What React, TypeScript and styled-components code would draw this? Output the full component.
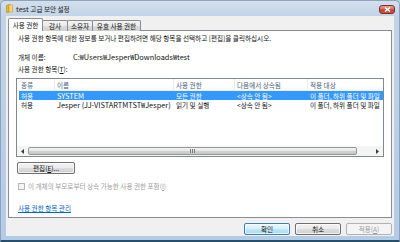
import React from 'react';
import styled, { createGlobalStyle, css } from 'styled-components';

const FONT = `"Noto Sans CJK KR", "Noto Sans", sans-serif`;

const Global = createGlobalStyle`
  html, body { margin: 0; padding: 0; width: 400px; height: 242px; overflow: hidden; background: #b9cde3; }
  * { box-sizing: border-box; }
`;

const Window = styled.div`
  width: 400px;
  height: 242px;
  display: flex;
  flex-direction: column;
  font-family: ${FONT};
  font-size: 6.6px;
  line-height: 8px;
  color: #111;
  background: linear-gradient(180deg, #d3dfec 0px, #c1d3e7 16px, #b4cbe5 100%);
  border: 1px solid #8ea3bb;
  border-bottom: 2px solid #26506c;
  border-radius: 5px 5px 0 0;
`;

const TitleBar = styled.div`
  height: 15px;
  display: flex;
  align-items: center;
  padding: 0 4px 0 5px;
  gap: 3px;
`;

const TitleText = styled.span`
  flex: 1;
  color: #1a1a1a;
`;

const Latin = styled.span`
  font-size: 7.4px;
  line-height: 8px;
`;

const CloseButton = styled.div`
  width: 16px;
  height: 9px;
  margin-top: 2px;
  border-radius: 3px;
  border: 1px solid #7b3128;
  background: linear-gradient(180deg, #e6a596 0%, #d66a5a 45%, #c0402f 55%, #c9584a 100%);
  display: flex;
  align-items: center;
  justify-content: center;
`;

const Client = styled.div`
  flex: 1;
  margin: 0 5px 4px 5px;
  background: #f0f0f0;
  display: flex;
  flex-direction: column;
  padding: 0 2px;
`;

const TabStrip = styled.div`
  height: 15px;
  display: flex;
  align-items: flex-end;
  margin-bottom: -1px;
  position: relative;
  z-index: 1;
`;

const Tab = styled.div<{ $active?: boolean; $w: number }>`
  width: ${p => p.$w}px;
  border: 1px solid #898c95;
  border-bottom: none;
  border-radius: 2px 2px 0 0;
  text-align: center;
  white-space: nowrap;
  & + & { margin-left: -1px; }
  ${p => p.$active
    ? css`
        height: 13px;
        background: #fff;
        padding-top: 2px;
        position: relative;
        z-index: 2;
      `
    : css`
        height: 11px;
        background: linear-gradient(180deg, #f3f3f3 0%, #ebebeb 50%, #dddddd 51%, #cfcfcf 100%);
        padding-top: 1px;
      `}
`;

const Panel = styled.div`
  height: 188px;
  background: #fff;
  border: 1px solid #898c95;
  padding: 0 7px 0 8px;
  display: flex;
  flex-direction: column;
`;

const Line = styled.div<{ $mt: number; $muted?: boolean }>`
  margin-top: ${p => p.$mt}px;
  padding-left: 1px;
  height: 8px;
  white-space: nowrap;
  display: flex;
  align-items: center;
  color: ${p => (p.$muted ? '#9c9c9c' : '#111')};
`;

const Label = styled.span<{ $w: number }>`
  display: inline-block;
  width: ${p => p.$w}px;
`;

const ListBox = styled.div`
  margin-top: 5px;
  margin-left: -1px;
  height: 79px;
  border: 1px solid #828790;
  display: flex;
  flex-direction: column;
  overflow: hidden;
`;

const GRID = '36px 119px 61px 73px 80px';

const HeaderRow = styled.div`
  height: 12px;
  display: grid;
  grid-template-columns: ${GRID};
  padding-left: 2px;
  background: linear-gradient(180deg, #ffffff 0%, #ffffff 60%, #f7f8fa 100%);
  border-bottom: 1px solid #eef0f3;
  color: #4c607a;
`;

const HeaderCell = styled.div`
  padding-left: 2px;
  display: flex;
  align-items: center;
  white-space: nowrap;
  border-right: 1px solid #e7eaee;
`;

const Row = styled.div<{ $selected?: boolean }>`
  height: 9px;
  margin-left: 2px;
  display: grid;
  grid-template-columns: ${GRID};
  background: ${p => (p.$selected ? '#3399ff' : 'transparent')};
  color: ${p => (p.$selected ? '#ffffff' : '#111')};
`;

const Cell = styled.div`
  padding-left: 2px;
  display: flex;
  align-items: center;
  white-space: nowrap;
`;

const Spacer = styled.div`
  flex: 1;
`;

const HScroll = styled.div`
  height: 10px;
  display: flex;
  align-items: stretch;
  background: #f4f4f4;
`;

const ArrowBtn = styled.div`
  width: 11px;
  display: flex;
  align-items: center;
  justify-content: center;
`;

const Thumb = styled.div`
  width: 329px;
  margin: 1px 0;
  border: 1px solid #979797;
  border-radius: 2px;
  background: linear-gradient(180deg, #f4f4f4 0%, #e6e6e6 45%, #d2d2d2 55%, #c6c6c6 100%);
  display: flex;
  align-items: center;
  justify-content: center;
`;

const Track = styled.div`
  flex: 1;
`;

const PushButton = styled.div<{ $w: number; $default?: boolean; $disabled?: boolean }>`
  width: ${p => p.$w}px;
  height: 12px;
  border-radius: 2px;
  display: flex;
  align-items: center;
  justify-content: center;
  white-space: nowrap;
  border: 1px solid ${p => (p.$disabled ? '#adb2b5' : p.$default ? '#3c7fb1' : '#707070')};
  color: ${p => (p.$disabled ? '#9a9a9a' : '#111')};
  background: ${p =>
    p.$disabled
      ? '#f4f4f4'
      : p.$default
      ? 'linear-gradient(180deg, #eaf6fd 0%, #d9f0fc 48%, #bee6fd 52%, #a7d9f5 100%)'
      : 'linear-gradient(180deg, #f2f2f2 0%, #ebebeb 48%, #dddddd 52%, #cfcfcf 100%)'};
  box-shadow: inset 0 0 0 1px ${p => (p.$disabled ? '#f4f4f4' : 'rgba(255,255,255,0.7)')};
`;

const EditButton = styled(PushButton)`
  margin-top: 5px;
`;

const CheckBox = styled.span`
  width: 7px;
  height: 7px;
  border: 1px solid #b5b5b5;
  background: #f4f4f4;
  margin-right: 3px;
`;

const Link = styled.span`
  color: #0066cc;
  text-decoration: underline;
`;

const ButtonRow = styled.div`
  flex: 1;
  display: flex;
  justify-content: flex-end;
  align-items: flex-start;
  padding-top: 5px;
  gap: 5px;
`;

const U = styled.span`
  text-decoration: underline;
`;

const rows = [
  { type: '허용', name: 'SYSTEM', perm: '모든 권한', inh: '<상속 안 됨>', apply: '이 폴더, 하위 폴더 및 파일', selected: true },
  { type: '허용', name: 'Jesper (JJ-VISTARTMTST₩Jesper)', perm: '읽기 및 실행', inh: '<상속 안 됨>', apply: '이 폴더, 하위 폴더 및 파일' },
];

export default function App() {
  return (
    <>
      <Global />
      <Window>
        <TitleBar>
          <svg width="7" height="9" viewBox="0 0 7 9">
            <path d="M0.5 1.5 L3 0.5 L3 8 L0.5 8.5 Z" fill="#e8b830" stroke="#b5851a" strokeWidth="0.6" />
            <path d="M3 0.5 L6.5 1 L6.5 8 L3 8 Z" fill="#f6d86a" stroke="#c39a2a" strokeWidth="0.6" />
          </svg>
          <TitleText><Latin>test</Latin> 고급 보안 설정</TitleText>
          <CloseButton>
            <svg width="7" height="5" viewBox="0 0 7 5">
              <path d="M1 0.5 L6 4.5 M6 0.5 L1 4.5" stroke="#fff" strokeWidth="1.4" />
            </svg>
          </CloseButton>
        </TitleBar>
        <Client>
          <TabStrip>
            <Tab $active $w={35}>사용 권한</Tab>
            <Tab $w={26}>감사</Tab>
            <Tab $w={26}>소유자</Tab>
            <Tab $w={49}>유효 사용 권한</Tab>
          </TabStrip>
          <Panel>
            <Line $mt={3}>사용 권한 항목에 대한 정보를 보거나 편집하려면 해당 항목을 선택하고 [편집]을 클릭하십시오.</Line>
            <Line $mt={11}>
              <Label $w={55}>개체 이름:</Label><Latin>C:₩Users₩Jesper₩Downloads₩test</Latin>
            </Line>
            <Line $mt={4}>사용 권한 항목(<U>T</U>):</Line>
            <ListBox>
              <HeaderRow>
                <HeaderCell>종류</HeaderCell>
                <HeaderCell>이름</HeaderCell>
                <HeaderCell>사용 권한</HeaderCell>
                <HeaderCell>다음에서 상속됨</HeaderCell>
                <HeaderCell>적용 대상</HeaderCell>
              </HeaderRow>
              {rows.map((r, i) => (
                <Row key={i} $selected={r.selected}>
                  <Cell>{r.type}</Cell>
                  <Cell><Latin>{r.name}</Latin></Cell>
                  <Cell>{r.perm}</Cell>
                  <Cell>{r.inh}</Cell>
                  <Cell>{r.apply}</Cell>
                </Row>
              ))}
              <Spacer />
              <HScroll>
                <ArrowBtn>
                  <svg width="3" height="5" viewBox="0 0 3 5"><path d="M3 0 L0 2.5 L3 5 Z" fill="#3a3a3a" /></svg>
                </ArrowBtn>
                <Thumb>
                  <svg width="6" height="4" viewBox="0 0 6 4"><path d="M0.5 0 V4 M2.5 0 V4 M4.5 0 V4" stroke="#7a7a7a" strokeWidth="1" /></svg>
                </Thumb>
                <Track />
                <ArrowBtn>
                  <svg width="3" height="5" viewBox="0 0 3 5"><path d="M0 0 L3 2.5 L0 5 Z" fill="#3a3a3a" /></svg>
                </ArrowBtn>
              </HScroll>
            </ListBox>
            <EditButton $w={58}>편집(<U>E</U>)...</EditButton>
            <Line $mt={8} $muted>
              <CheckBox />이 개체의 부모로부터 상속 가능한 사용 권한 포함(<U>I</U>)
            </Line>
            <Line $mt={14}>
              <Link>사용 권한 항목 관리</Link>
            </Line>
          </Panel>
          <ButtonRow>
            <PushButton $w={46} $default>확인</PushButton>
            <PushButton $w={46}>취소</PushButton>
            <PushButton $w={46} $disabled>적용(<U>A</U>)</PushButton>
          </ButtonRow>
        </Client>
      </Window>
    </>
  );
}
